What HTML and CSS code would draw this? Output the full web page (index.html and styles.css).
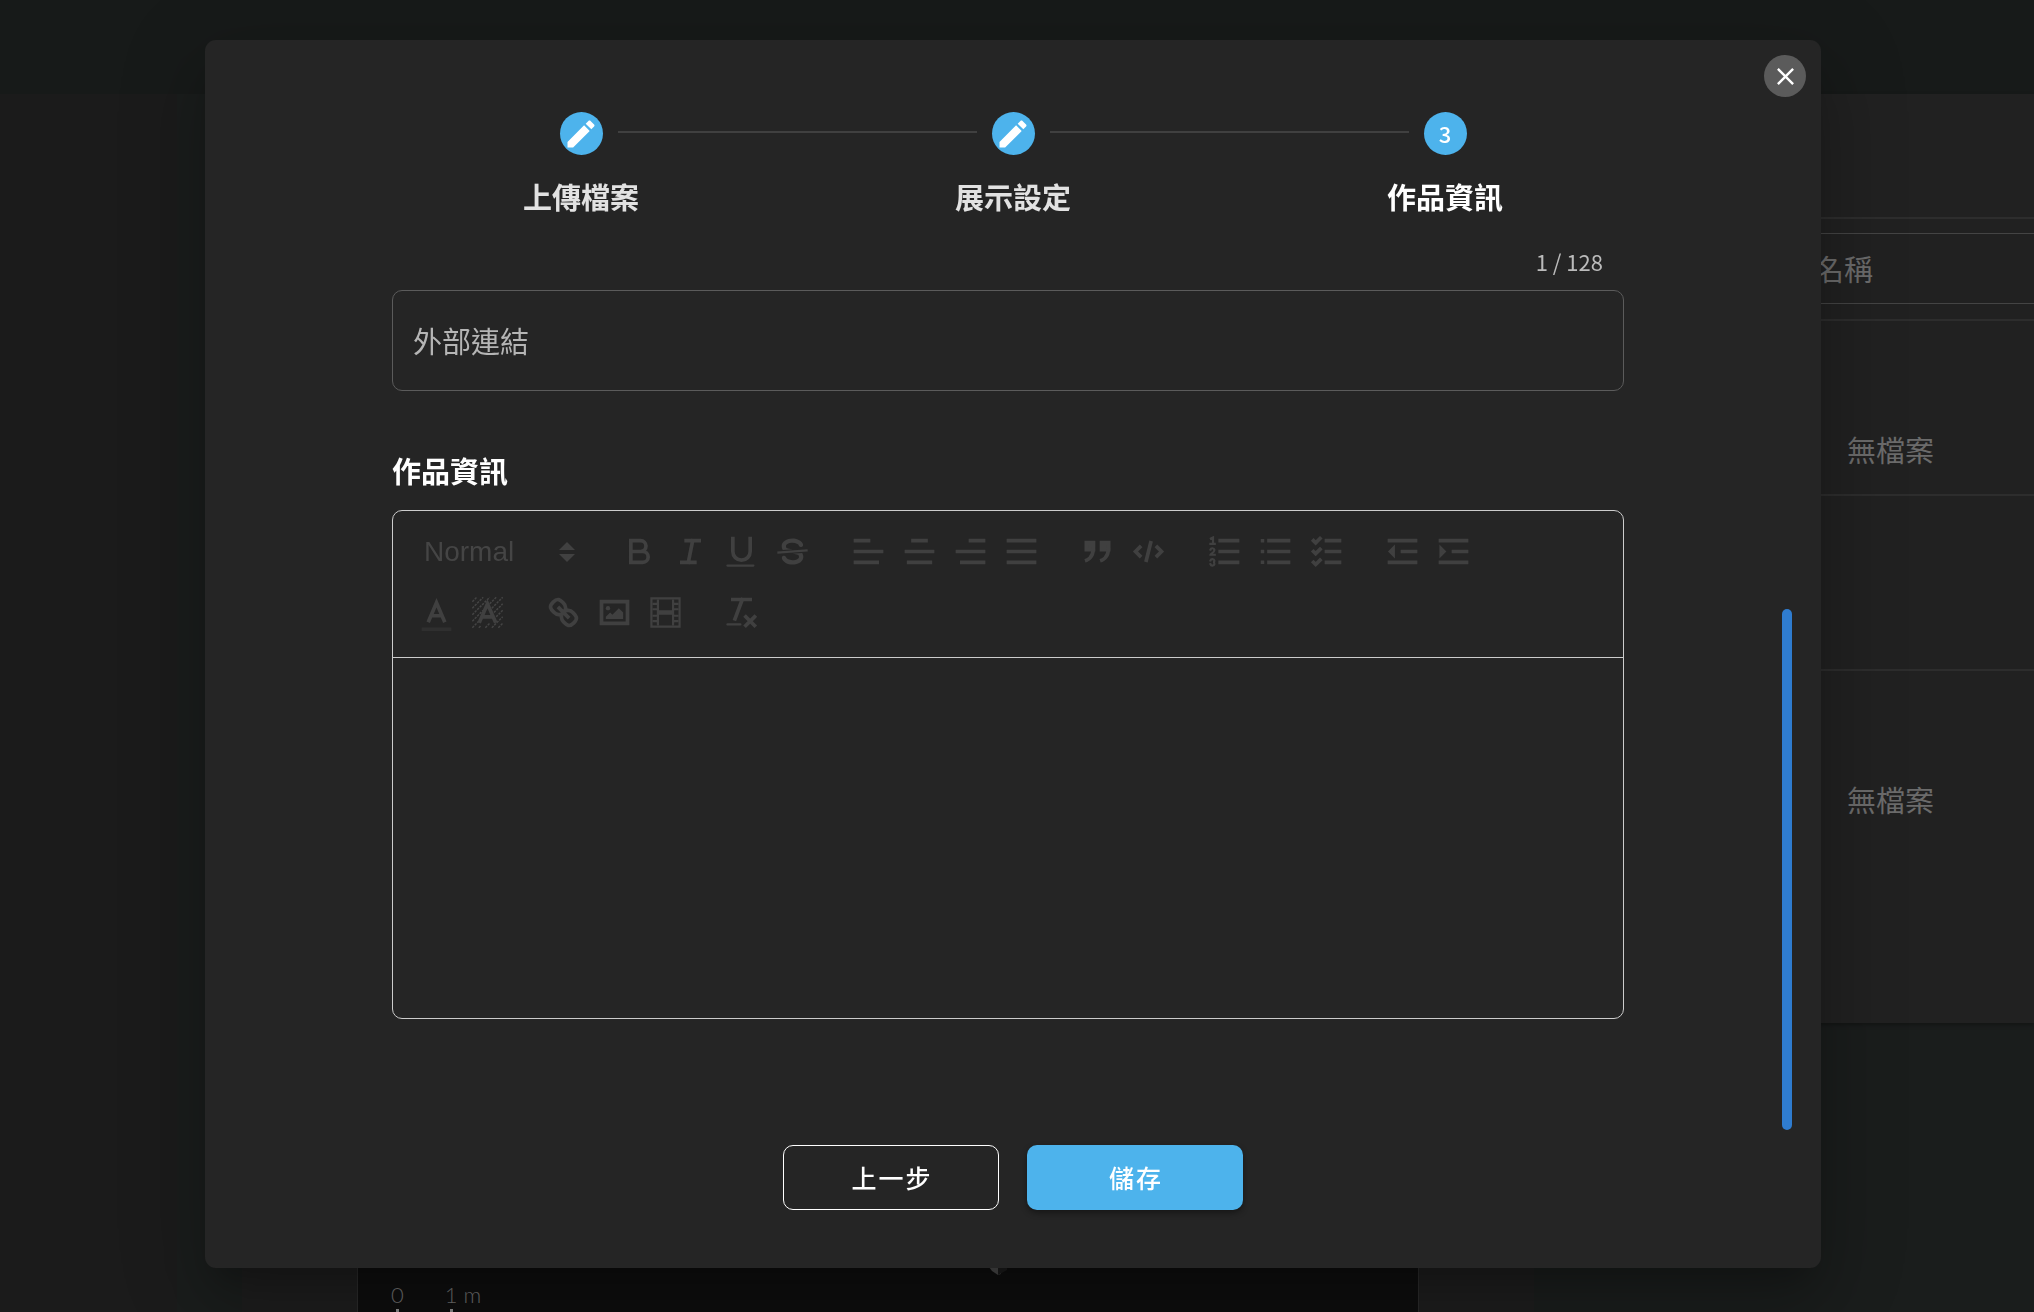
FILE: index.html
```html
<!DOCTYPE html>
<html lang="zh-Hant">
<head>
<meta charset="utf-8">
<meta name="viewport" content="width=device-width, initial-scale=1">
<title>作品資訊</title>
<link rel="stylesheet" href="styles.css">
</head>
<body>
<div class="app" aria-hidden="true">
  <header class="app-bar"></header>
  <div class="workspace">
    <aside class="sidebar"></aside>
    <main class="stage">
      <section class="viewer">
        <div class="canvas">
          <svg class="model" viewBox="0 0 18 12"><path d="M0 0h12v11l-3 1-6-4-3-4z" fill="#4a4a4a"/><path d="M9 3h9v4l-9 5z" fill="#1c1c1c"/></svg>
          <div class="scale"><span class="scale-mark">0</span><span class="scale-mark">1 m</span></div>
        </div>
      </section>
    </main>
    <section class="panel">
      <div class="panel-row row-head"></div>
      <div class="panel-row row-name"><div class="name-box">名稱</div></div>
      <div class="panel-row row-file">無檔案</div>
      <div class="panel-row row-blank"></div>
      <div class="panel-row row-last">無檔案</div>
    </section>
  </div>
</div>

<div class="overlay">
  <div class="modal" role="dialog" aria-modal="true" aria-label="作品資訊">
    <button class="close" type="button" aria-label="關閉">
      <svg viewBox="0 0 24 24"><path d="M19 6.41L17.59 5 12 10.59 6.41 5 5 6.41 10.59 12 5 17.59 6.41 19 12 13.41 17.59 19 19 17.59 13.41 12z"/></svg>
    </button>

    <ol class="stepper">
      <li class="step">
        <div class="step-track"><span class="badge"><svg viewBox="0 0 24 24"><path d="M3 17.25V21h3.75L17.81 9.94l-3.75-3.75L3 17.25zM20.71 7.04c.39-.39.39-1.02 0-1.41l-2.34-2.34c-.39-.39-1.02-.39-1.41 0l-1.83 1.83 3.75 3.75 1.83-1.83z"/></svg></span></div>
        <span class="step-label">上傳檔案</span>
      </li>
      <li class="step">
        <div class="step-track"><span class="badge"><svg viewBox="0 0 24 24"><path d="M3 17.25V21h3.75L17.81 9.94l-3.75-3.75L3 17.25zM20.71 7.04c.39-.39.39-1.02 0-1.41l-2.34-2.34c-.39-.39-1.02-.39-1.41 0l-1.83 1.83 3.75 3.75 1.83-1.83z"/></svg></span></div>
        <span class="step-label">展示設定</span>
      </li>
      <li class="step current" aria-current="step">
        <div class="step-track"><span class="badge">3</span></div>
        <span class="step-label">作品資訊</span>
      </li>
    </ol>

    <form class="form">
      <div class="scroller">
        <div class="fields">
          <div class="counter">1 / 128</div>
          <input class="link-input" type="url" placeholder="外部連結" aria-label="外部連結">
          <label class="title" for="info">作品資訊</label>
          <div class="editor">
            <div class="toolbar" role="toolbar" aria-label="文字格式">
              <div class="picker">
                <select aria-label="標題" disabled><option>Normal</option></select>
                <svg viewBox="0 0 16 20"><path d="M8 0l8 8H0zM8 20l8-8H0z"/></svg>
              </div>
              <div class="group">
                <button type="button" aria-label="粗體" disabled><svg class="icon" viewBox="0 0 18 18"><path d="M5 4h4.500a2.500 2.500 0 0 1 0 5H5zM5 9h5.500a2.500 2.500 0 0 1 0 5H5z"/></svg></button>
                <button type="button" aria-label="斜體" disabled><svg class="icon" viewBox="0 0 18 18"><path d="M7 4h6M5 14h6M8 14l2-10"/></svg></button>
                <button type="button" aria-label="底線" disabled><svg class="icon" viewBox="0 0 18 18"><path d="M5 3v6a4 4 0 0 0 8 0V3"/><rect class="fill" x="2" y="15" width="13" height="1" rx=".5"/></svg></button>
                <button type="button" aria-label="刪除線" disabled><svg class="icon" viewBox="0 0 18 18"><path class="thin" d="M15.500 8.500l-13 1"/><path class="fill" d="M9.007,8C6.542,7.791,6,7.519,6,6.500,6,5.792,7.283,5,9,5c1.571,0,2.765.679,2.969,1.309a1,1,0,0,0,1.900-.617C13.356,4.106,11.354,3,9,3,6.200,3,4,4.538,4,6.500a3.200,3.200,0,0,0,.5,1.843Z"/><path class="fill" d="M8.984,10C11.457,10.208,12,10.479,12,11.500c0,.708-1.283,1.500-3,1.500-1.571,0-2.765-.679-2.969-1.309a1,1,0,1,0-1.900.617C4.644,13.894,6.646,15,9,15c2.800,0,5-1.538,5-3.500a3.200,3.200,0,0,0-.5-1.843Z"/></svg></button>
              </div>
              <div class="group">
                <button type="button" aria-label="靠左" disabled><svg class="icon" viewBox="0 0 18 18"><path d="M3 9h12M3 14h10M3 4h6"/></svg></button>
                <button type="button" aria-label="置中" disabled><svg class="icon" viewBox="0 0 18 18"><path d="M3 9h12M4 14h10M6 4h6"/></svg></button>
                <button type="button" aria-label="靠右" disabled><svg class="icon" viewBox="0 0 18 18"><path d="M3 9h12M5 14h10M9 4h6"/></svg></button>
                <button type="button" aria-label="左右對齊" disabled><svg class="icon" viewBox="0 0 18 18"><path d="M3 9h12M3 14h12M3 4h12"/></svg></button>
              </div>
              <div class="group">
                <button type="button" aria-label="引用" disabled><svg class="icon" viewBox="0 0 18 18"><path class="quote" d="M4 5h3v3H4zM11 5h3v3h-3z"/><path d="M7 8c0 4.031-3 5-3 5M14 8c0 4.031-3 5-3 5"/></svg></button>
                <button type="button" aria-label="程式碼" disabled><svg class="icon" viewBox="0 0 18 18"><path d="M5 7L3 9l2 2M13 7l2 2-2 2M10 5L8 13"/></svg></button>
              </div>
              <div class="group">
                <button type="button" aria-label="編號清單" disabled><svg class="icon" viewBox="0 0 18 18"><path d="M7 4h8M7 9h8M7 14h8"/><path class="thin" d="M2.500 5.500h2M2.700 3l1-.5v3M4.500 10.500h-2c0-.234 1.850-1.076 1.850-2.234A.959.959 0 0 0 2.500 8.156M2.500 14.846a.959.959 0 0 0 1.850-.109A.7.7 0 0 0 3.750 14a.688.688 0 0 0 .6-.736.959.959 0 0 0-1.850-.109"/></svg></button>
                <button type="button" aria-label="項目清單" disabled><svg class="icon" viewBox="0 0 18 18"><path d="M6 4h9M6 9h9M6 14h9"/><path class="fill" d="M2.200 3.200h1.600v1.600H2.200zM2.200 8.200h1.600v1.600H2.200zM2.200 13.200h1.600v1.600H2.200z"/></svg></button>
                <button type="button" aria-label="核取清單" disabled><svg class="icon" viewBox="0 0 18 18"><path d="M9 4h6M9 9h6M9 14h6M3 4l1 1 2-2M3 9l1 1 2-2M3 14l1 1 2-2"/></svg></button>
              </div>
              <div class="group">
                <button type="button" aria-label="減少縮排" disabled><svg class="icon" viewBox="0 0 18 18"><path d="M3 4h12M9 9h6M3 14h12"/><path class="both" d="M5 7v4L3 9z"/></svg></button>
                <button type="button" aria-label="增加縮排" disabled><svg class="icon" viewBox="0 0 18 18"><path d="M3 4h12M9 9h6M3 14h12"/><path class="both" d="M3 7v4l2-2z"/></svg></button>
              </div>
              <div class="group">
                <button type="button" aria-label="文字顏色" disabled><svg class="icon" viewBox="0 0 18 18"><path class="faint" d="M3 16.700h12"/><path d="M5.500 12.700L9 4.500l3.500 8.200M6.600 10.500h4.800"/></svg></button>
                <button type="button" aria-label="背景顏色" disabled><svg class="icon" viewBox="0 0 18 18"><path class="hatch" d="M2 4l2-2M2 7l5-5M2 10l8-8M2 13l5-5M10 5l3-3M2 16l3-3M11 7l5-5M5 16l1-1M8 16l2-2M12 9l4-4M11 16l5-5M13 11l3-3M14 16l2-2"/><path d="M5.500 13L9 5l3.500 8M6.600 11h4.800"/></svg></button>
              </div>
              <div class="group">
                <button type="button" aria-label="連結" disabled><svg class="icon" viewBox="0 0 18 18"><path d="M7 7l4 4M8.900,4.577a3.476,3.476,0,0,1,.36,4.679A3.476,3.476,0,0,1,4.577,8.900C3.185,7.500,2.035,6.400,4.217,4.217S7.500,3.185,8.900,4.577ZM13.423,9.100a3.476,3.476,0,0,0-4.679-.36,3.476,3.476,0,0,0,.36,4.679c1.392,1.392,2.500,2.542,4.679.36S14.815,10.500,13.423,9.100Z"/></svg></button>
                <button type="button" aria-label="圖片" disabled><svg class="icon" viewBox="0 0 18 18"><path d="M3 4h12v10H3z"/><circle class="fill" cx="6" cy="7" r="1"/><path class="fill" d="M5 12v-1l2-2 1 1 3-3 2 2v3z"/></svg></button>
                <button type="button" aria-label="影片" disabled><svg class="icon" viewBox="0 0 18 18"><path class="film" d="M2.500 2.500h13v13h-13z"/><path class="fill" d="M5 3h1v12H5zM12 3h1v12h-1zM5 8h8v2H5zM3 4.500h3v1H3zM3 7h3v1H3zM3 10h3v1H3zM3 12.500h3v1H3zM12 4.500h3v1h-3zM12 7h3v1h-3zM12 10h3v1h-3zM12 12.500h3v1h-3z"/></svg></button>
              </div>
              <div class="group">
                <button type="button" aria-label="清除格式" disabled><svg class="icon" viewBox="0 0 18 18"><path d="M5 3h8M6 12l3.350-9M11 11l4 4M15 11l-4 4"/><rect class="fill" x="2" y="14" width="7" height="1" rx=".5"/></svg></button>
              </div>
            </div>
            <textarea class="editor-body" id="info"></textarea>
          </div>
        </div>
        <div class="track"><div class="thumb"></div></div>
      </div>
      <div class="actions">
        <button class="btn outlined" type="button">上一步</button>
        <button class="btn primary" type="submit">儲存</button>
      </div>
    </form>
  </div>
</div>
</body>
</html>
```
FILE: styles.css
```css
* {
  box-sizing: border-box;
}

body {
  margin: 0;
  background: #1a1d1c;
  color: #fff;
  font-family: "Noto Sans CJK TC", "Noto Sans", sans-serif;
  font-size: 29px;
  line-height: 43px;
}

button,
input,
select,
textarea {
  margin: 0;
  font: inherit;
  color: inherit;
}

/* Page behind the dialog */
.app {
  display: flex;
  flex-direction: column;
  height: 100vh;
  overflow: hidden;
}

.app-bar {
  flex: none;
  height: 94px;
  background: #171a19;
}

.workspace {
  flex: 1;
  display: flex;
  align-items: stretch;
  min-height: 0;
}

.sidebar {
  flex: none;
  width: 177px;
  background: #1b1b1b;
}

.stage {
  flex: 1;
  display: flex;
  padding-left: 65px;
}

.viewer {
  flex: 1;
  display: flex;
  padding: 0 115px;
  background: #1d1d1d;
}

.canvas {
  flex: 1;
  display: flex;
  flex-direction: column;
  justify-content: flex-end;
  border: solid #2a2a2a;
  border-width: 0 1px;
  background: #0e0e0e;
}

.model {
  display: block;
  align-self: center;
  width: 18px;
  height: 12px;
  margin-left: 220px;
}

.scale {
  display: flex;
  gap: 41px;
  padding: 6px 0 0 33px;
  color: #6b6b6b;
  font: 300 22px/28px Lato, sans-serif;
}

.scale-mark::after {
  content: "";
  display: block;
  width: 3px;
  height: 3px;
  margin-left: 5px;
  background: #8a8a8a;
}

.panel {
  flex: none;
  align-self: flex-start;
  width: 500px;
  background: #212121;
  color: #6b6b6b;
  box-shadow: 0 2px 4px rgba(0, 0, 0, 0.3);
}

.panel-row {
  border-bottom: 2px solid #2d2d2d;
  padding-left: 313px;
}

.row-head {
  height: 125px;
}

.row-name {
  padding: 14px 0 15px;
}

.name-box {
  padding: 13px 0 13px 281px;
  border: solid #444;
  border-width: 1px 0;
}

.row-file {
  height: 175px;
  padding-top: 107px;
}

.row-blank {
  height: 175px;
}

.row-last {
  height: 352px;
  padding-top: 107px;
  border-bottom: 0;
}

/* Dialog */
.overlay {
  position: fixed;
  inset: 0;
  padding: 40px 213px 44px 205px;
  overflow: hidden;
}

.modal {
  position: relative;
  padding: 72px 0 58px;
  border-radius: 11px;
  background: #252525;
  box-shadow: 0 20px 27px -13px rgba(0, 0, 0, 0.2), 0 43px 69px 5px rgba(0, 0, 0, 0.14), 0 16px 83px 14px rgba(0, 0, 0, 0.12);
}

.close {
  position: absolute;
  top: 15px;
  right: 15px;
  display: grid;
  place-items: center;
  width: 42px;
  height: 42px;
  padding: 0;
  border: 0;
  border-radius: 50%;
  background: #5b5b5b;
}

.close svg {
  width: 29px;
  height: 29px;
  fill: #fff;
}

.stepper {
  display: flex;
  margin: 0;
  padding: 0 160px;
  list-style: none;
}

.step {
  flex: 1;
  display: flex;
  flex-direction: column;
  gap: 20px;
  text-align: center;
}

.step-track {
  display: flex;
  align-items: center;
  gap: 15px;
}

.step-track::before,
.step-track::after {
  content: "";
  flex: 1;
  height: 2px;
  margin-bottom: 3px;
  background: #404040;
}

.step:first-child .step-track::before,
.step:last-child .step-track::after {
  background: none;
}

.badge {
  display: grid;
  place-items: center;
  width: 43px;
  height: 43px;
  border-radius: 50%;
  background: #4db3ec;
  font-size: 22px;
  font-weight: 500;
}

.badge svg {
  width: 36px;
  height: 36px;
  fill: #fff;
}

.step-label {
  color: #e2e2e2;
  font-weight: 700;
}

.current .step-label {
  color: #fff;
}

.scroller {
  display: flex;
  margin: 14px 29px 15px;
}

.fields {
  flex: 1;
  display: flex;
  flex-direction: column;
  padding: 18px 158px 111px;
}

.counter {
  padding-right: 21px;
  color: #bbb;
  font-size: 22px;
  line-height: 22px;
  text-align: right;
}

.link-input {
  height: 101px;
  margin-top: 18px;
  padding: 0 20px 2px;
  border: 1px solid #5b5b5b;
  border-radius: 10px;
  background: none;
}

.link-input::placeholder {
  color: #b5b5b5;
  opacity: 1;
}

.title {
  margin: 58px 0 18px;
  font-weight: 700;
}

.editor {
  display: flex;
  flex-direction: column;
  border: 1px solid #ccc;
  border-radius: 10px;
}

.toolbar {
  display: flex;
  flex-wrap: wrap;
  gap: 18px 25px;
  padding: 19px 24px 23px 18px;
  border-bottom: 1px solid #ccc;
}

.picker {
  position: relative;
  width: 178px;
  height: 43px;
}

.picker select {
  display: block;
  width: 100%;
  height: 100%;
  padding: 0 13px 5px;
  border: 0;
  background: none;
  appearance: none;
  color: #454545;
  font-family: "Liberation Sans", Arial, sans-serif;
  font-size: 28px;
  opacity: 1;
}

.picker svg {
  position: absolute;
  top: 12px;
  right: 14px;
  width: 16px;
  height: 20px;
  fill: #414141;
}

.group {
  display: flex;
}

.group button {
  width: 51px;
  height: 43px;
  padding: 2px 6px;
  border: 0;
  background: none;
}

.icon {
  display: block;
  width: 39px;
  height: 39px;
  fill: none;
  stroke: #404040;
  stroke-width: 1.7;
  stroke-linecap: square;
  stroke-linejoin: miter;
}

.icon .fill {
  fill: #404040;
  stroke: none;
}

.icon .both {
  fill: #404040;
  stroke-width: 1;
}

.icon .quote {
  fill: #404040;
  stroke-width: 2;
}

.icon .thin,
.icon .film {
  stroke-width: 1;
}

.icon .faint {
  stroke: #2f2f2f;
}

.icon .hatch {
  stroke: #444;
  stroke-width: 0.7;
  stroke-linecap: butt;
  stroke-dasharray: 1.1 0.5;
}

.editor-body {
  display: block;
  height: 360px;
  padding: 22px 27px;
  border: 0;
  background: none;
  resize: none;
  outline: 0;
}

.track {
  flex: none;
  display: flex;
  align-items: flex-end;
  width: 10px;
}

.thumb {
  width: 100%;
  height: 58%;
  border-radius: 5px;
  background: #2f7ccf;
}

.actions {
  display: flex;
  justify-content: center;
  gap: 28px;
}

.btn {
  width: 216px;
  height: 65px;
  padding: 0 0 0 2px;
  border: 0;
  border-radius: 10px;
  font-size: 25px;
  font-weight: 500;
  letter-spacing: 2px;
}

.outlined {
  border: 1px solid #fff;
  background: none;
}

.primary {
  background: #4db3ec;
  box-shadow: 0 3px 6px rgba(0, 0, 0, 0.4);
}
```
